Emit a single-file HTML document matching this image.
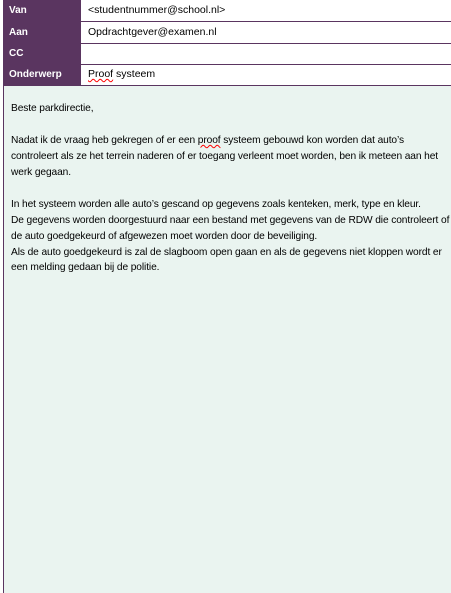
<html><head><style>
body{margin:0;width:451px;height:593px;background:#fff;font-family:"Liberation Sans",sans-serif;position:relative;overflow:hidden}
.hdr{position:absolute;left:3px;width:448px;height:21px;border-bottom:1px solid #5a3560}
.lab{position:absolute;left:0;top:0;width:78px;height:21px;background:#5a3560;color:#fff;font-weight:bold;font-size:10px;line-height:21px;padding-left:6px;box-sizing:border-box}
.val{position:absolute;left:85px;top:0;font-size:10.5px;line-height:21px;color:#000}
.body{position:absolute;left:3px;top:86px;width:448px;height:507px;background:#eaf4f0;border-left:1px solid #5a3560}
.t{position:absolute;left:7px;font-size:10.2px;white-space:nowrap;color:#000;letter-spacing:-0.1px}
.sq{text-decoration:underline wavy red;text-decoration-thickness:1px}
</style></head><body>
<div class="hdr" style="top:0"><div class="lab">Van</div><div class="val">&lt;studentnummer@school.nl&gt;</div></div>
<div class="hdr" style="top:22px"><div class="lab">Aan</div><div class="val">Opdrachtgever@examen.nl</div></div>
<div class="hdr" style="top:43px"><div class="lab">CC</div></div>
<div class="hdr" style="top:64px"><div class="lab">Onderwerp</div><div class="val"><span class="sq">Proof</span> systeem</div></div>
<div class="body">
<div class="t" style="top:17px">Beste parkdirectie,</div>
<div class="t" style="top:49px">Nadat ik de vraag heb gekregen of er een <span class="sq">proof</span> systeem gebouwd kon worden dat auto’s</div>
<div class="t" style="top:65px">controleert als ze het terrein naderen of er toegang verleent moet worden, ben ik meteen aan het</div>
<div class="t" style="top:81px">werk gegaan.</div>
<div class="t" style="top:113px">In het systeem worden alle auto’s gescand op gegevens zoals kenteken, merk, type en kleur.</div>
<div class="t" style="top:129px">De gegevens worden doorgestuurd naar een bestand met gegevens van de RDW die controleert of</div>
<div class="t" style="top:145px">de auto goedgekeurd of afgewezen moet worden door de beveiliging.</div>
<div class="t" style="top:161px">Als de auto goedgekeurd is zal de slagboom open gaan en als de gegevens niet kloppen wordt er</div>
<div class="t" style="top:176px">een melding gedaan bij de politie.</div>
</div>
</body></html>
